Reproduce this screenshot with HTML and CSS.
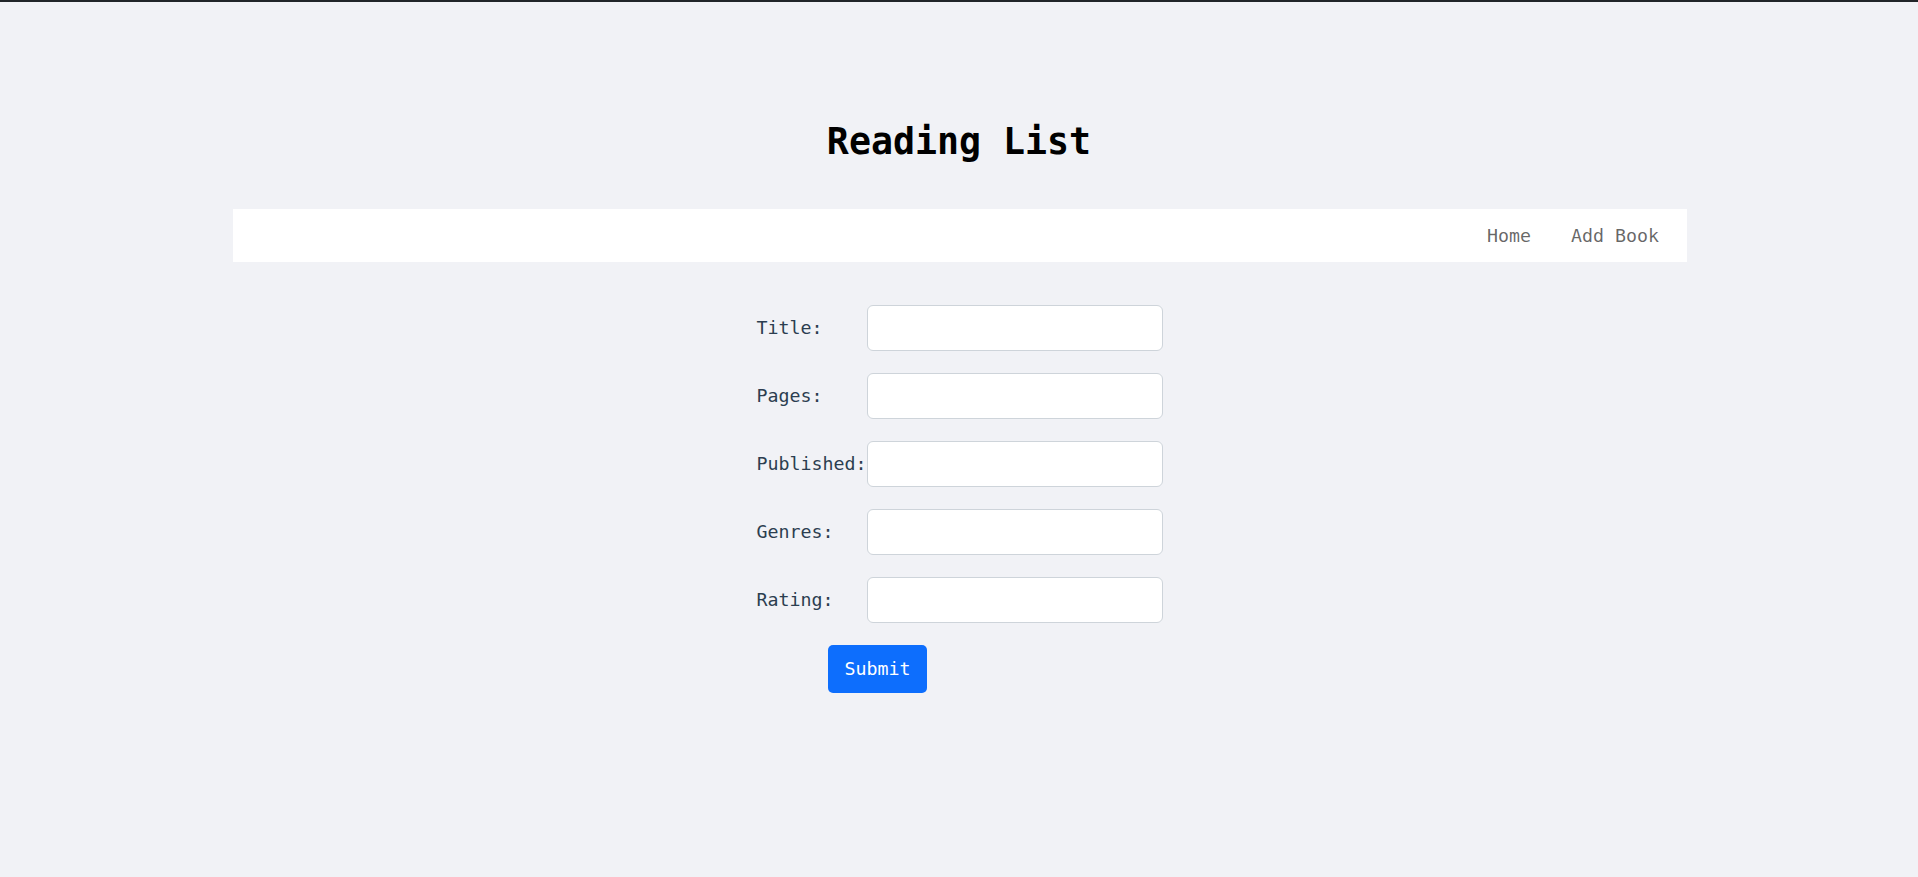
FILE: index.html
```html
<!DOCTYPE html>
<html lang="en">
<head>
<meta charset="utf-8">
<title>Reading List</title>
<link rel="stylesheet" href="styles.css">
</head>
<body>
<div class="topbar"></div>
<h1 class="title">Reading List</h1>
<nav class="nav">
  <a class="nav-link" href="#">Home</a>
  <a class="nav-link" href="#">Add Book</a>
</nav>
<form class="book-form">
  <label class="field-label" for="title">Title:</label>
  <input class="field-input" id="title" type="text">
  <label class="field-label" for="pages">Pages:</label>
  <input class="field-input" id="pages" type="text">
  <label class="field-label" for="published">Published:</label>
  <input class="field-input" id="published" type="text">
  <label class="field-label" for="genres">Genres:</label>
  <input class="field-input" id="genres" type="text">
  <label class="field-label" for="rating">Rating:</label>
  <input class="field-input" id="rating" type="text">
  <button class="submit-btn" type="submit">Submit</button>
</form>
</body>
</html>
```
FILE: styles.css
```css
html, body {
  margin: 0;
  padding: 0;
}
body {
  background: #f1f2f6;
  font-family: "DejaVu Sans Mono", "Liberation Mono", monospace;
  font-size: 18.3px;
  color: #212529;
  min-height: 877px;
}
.topbar {
  height: 2px;
  background: #212529;
}
.title {
  margin: 118px 0 45px;
  text-align: center;
  font-size: 36.6px;
  line-height: 1.2;
  font-weight: bold;
  color: #000;
}
.nav {
  width: 1454px;
  height: 53px;
  margin: 0 auto;
  position: relative;
  left: 1px;
  box-sizing: border-box;
  background: #fff;
  display: flex;
  justify-content: flex-end;
  align-items: center;
  gap: 40px;
  padding-right: 28px;
}
.nav-link {
  color: rgba(0, 0, 0, 0.6);
  text-decoration: none;
  line-height: 1.5;
}
.book-form {
  margin: 43px 0 0 1px;
  display: grid;
  grid-template-columns: max-content 296px;
  justify-content: center;
  row-gap: 22px;
  align-items: center;
}
.field-label {
  color: #2c3e50;
}
.field-input {
  box-sizing: border-box;
  height: 46px;
  width: 296px;
  border: 1px solid #ced4da;
  border-radius: 6px;
  background: #fff;
  margin: 0;
  padding: 6px 14px;
  font: inherit;
}
.submit-btn {
  grid-column: 1 / -1;
  justify-self: start;
  margin-left: 72px;
  height: 48px;
  padding: 0 16px;
  border: none;
  border-radius: 5px;
  background: #0d6efd;
  color: #fff;
  font: inherit;
  cursor: pointer;
}
```
